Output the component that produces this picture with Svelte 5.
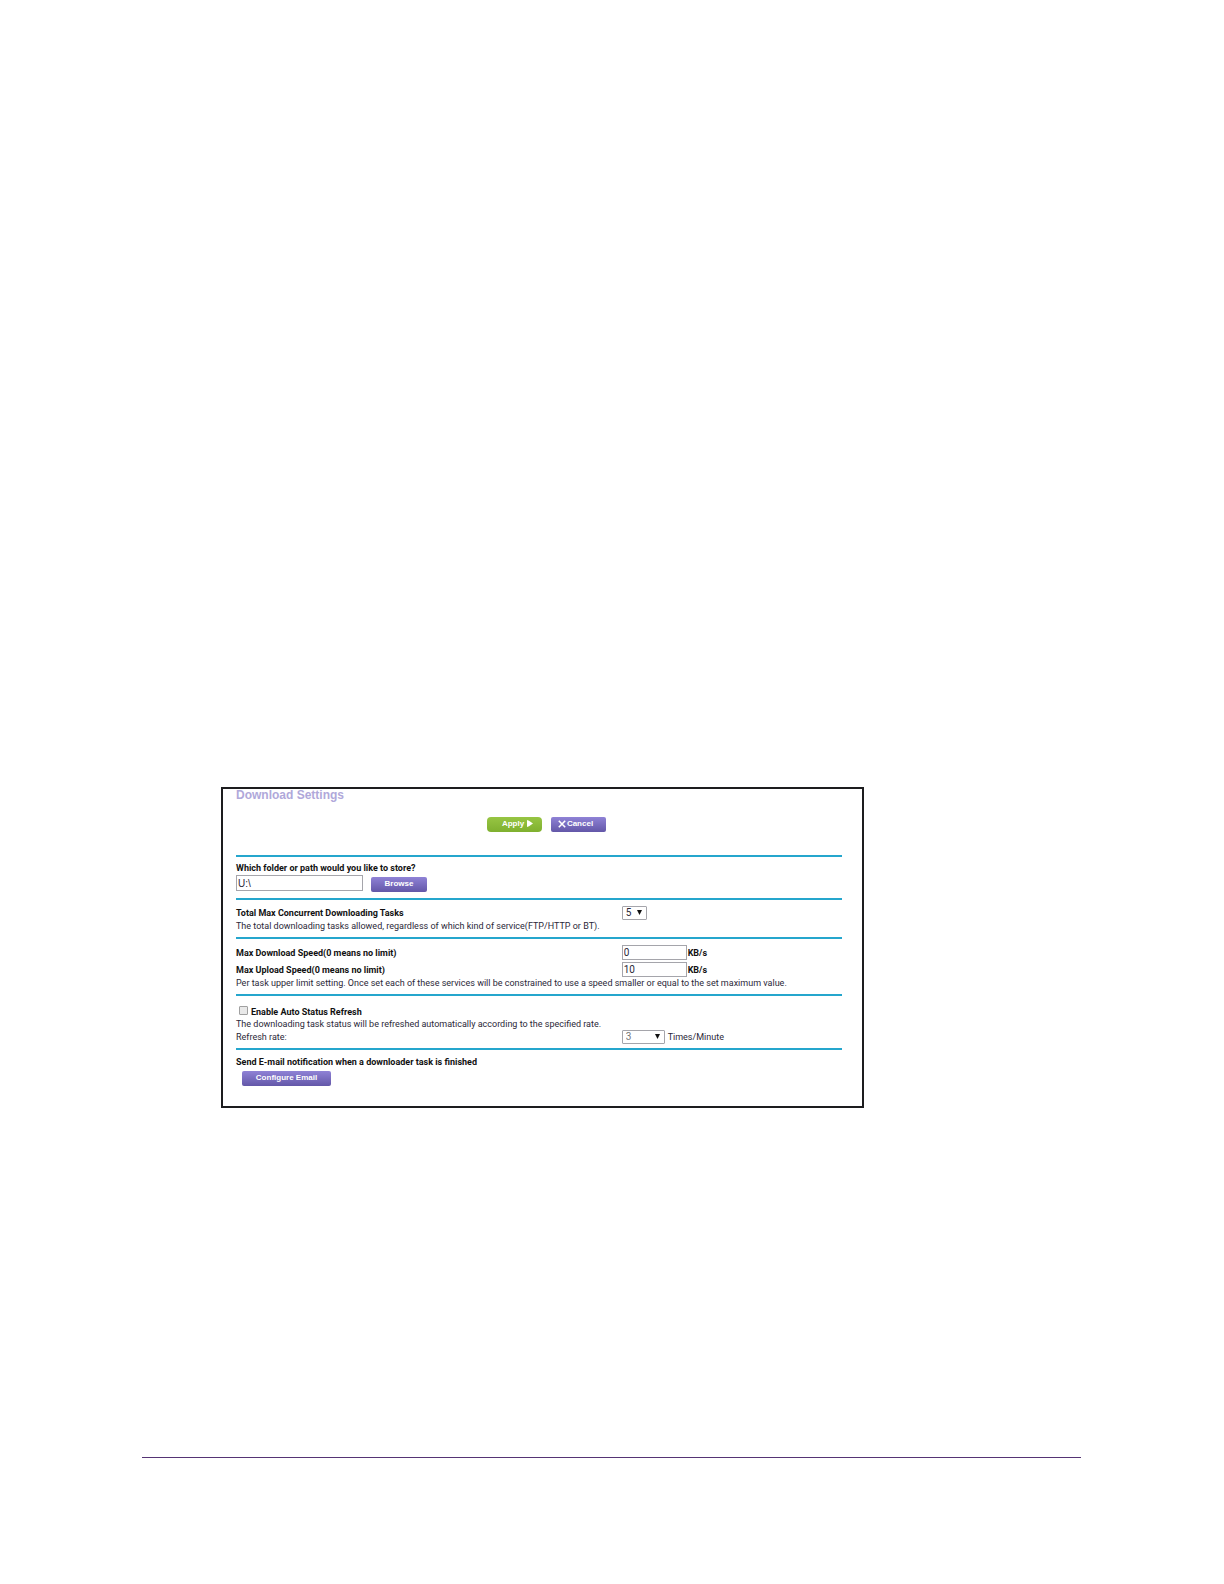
<script>
    let folder = "U:\\";
    let maxTasks = "5";
    let downloadSpeed = "0";
    let uploadSpeed = "10";
    let autoRefresh = false;
    let refreshRate = "3";

    const taskOptions = ["1", "2", "3", "4", "5"];
    const rateOptions = ["1", "2", "3", "4", "5", "6"];
</script>

<main>
    <form class="panel" on:submit|preventDefault>
        <h1>Download Settings</h1>

        <div class="actions">
            <button class="apply" type="submit">
                Apply
                <svg width="6" height="7" viewBox="0 0 6 7"><path d="M0 0 L2 0.8 L6 3.5 L2 6.2 L0 7 Z" fill="#fff" /></svg>
            </button>
            <button class="cancel" type="reset">
                <svg width="8" height="8" viewBox="0 0 8 8"><path d="M0.8 0.8 L7.2 7.2 M7.2 0.8 L0.8 7.2" stroke="#fff" stroke-width="1.6" /></svg>
                Cancel
            </button>
        </div>

        <section class="folder">
            <label class="bold" for="folder">Which folder or path would you like to store?</label>
            <div class="line">
                <input id="folder" class="path" type="text" bind:value={folder} />
                <button class="browse" type="button">Browse</button>
            </div>
        </section>

        <section class="tasks">
            <div class="row">
                <label class="bold" for="tasks">Total Max Concurrent Downloading Tasks</label>
                <span class="select short">
                    <select id="tasks" bind:value={maxTasks}>
                        {#each taskOptions as option}
                            <option>{option}</option>
                        {/each}
                    </select>
                    <svg width="5" height="5" viewBox="0 0 5 5"><path d="M0 0 H5 L2.5 5 Z" fill="#111" /></svg>
                </span>
            </div>
            <p>The total downloading tasks allowed, regardless of which kind of service(FTP/HTTP or BT).</p>
        </section>

        <section class="speed">
            <div class="row">
                <label class="bold" for="download">Max Download Speed(0 means no limit)</label>
                <span class="field">
                    <input id="download" type="text" bind:value={downloadSpeed} />
                    <span class="bold">KB/s</span>
                </span>
            </div>
            <div class="row">
                <label class="bold" for="upload">Max Upload Speed(0 means no limit)</label>
                <span class="field">
                    <input id="upload" type="text" bind:value={uploadSpeed} />
                    <span class="bold">KB/s</span>
                </span>
            </div>
            <p>Per task upper limit setting. Once set each of these services will be constrained to use a speed smaller or equal to the set maximum value.</p>
        </section>

        <section class="refresh">
            <label class="check bold">
                <input type="checkbox" bind:checked={autoRefresh} />
                Enable Auto Status Refresh
            </label>
            <p>The downloading task status will be refreshed automatically according to the specified rate.</p>
            <div class="row">
                <label for="rate">Refresh rate:</label>
                <span class="field">
                    <span class="select">
                        <select id="rate" disabled={!autoRefresh} bind:value={refreshRate}>
                            {#each rateOptions as option}
                                <option>{option}</option>
                            {/each}
                        </select>
                        <svg width="5" height="5" viewBox="0 0 5 5"><path d="M0 0 H5 L2.5 5 Z" fill="#111" /></svg>
                    </span>
                    <span class="unit">Times/Minute</span>
                </span>
            </div>
        </section>

        <section class="email">
            <p class="bold">Send E-mail notification when a downloader task is finished</p>
            <button class="configure" type="button">Configure Email</button>
        </section>
    </form>

    <hr />
</main>

<style>
    :global(body) {
        margin: 0;
        background: #fff;
    }

    main {
        padding: 787px 143px 126px 142px;
        font-family: Roboto, "Liberation Sans", sans-serif;
        font-size: 9px;
        line-height: 12px;
        color: #2b2838;
    }

    .panel {
        margin: 0 217px 0 79px;
        padding: 0 20px 20px 13px;
        border: 2px solid #1d1d1f;
    }

    h1 {
        margin: 0;
        font-family: "Liberation Sans", sans-serif;
        font-size: 12px;
        line-height: 12px;
        color: #b0a8da;
    }

    p {
        margin: 0;
    }

    .bold {
        font-weight: bold;
        color: #111;
    }

    button {
        display: flex;
        align-items: center;
        justify-content: center;
        box-sizing: border-box;
        width: 55px;
        height: 15px;
        padding: 0 0 2px;
        border: none;
        border-radius: 2px;
        background: linear-gradient(#8f82d6, #6357a8);
        font-family: "Liberation Sans", sans-serif;
        font-size: 8px;
        font-weight: bold;
        line-height: 12px;
        color: #fff;
        cursor: pointer;
    }

    .apply {
        gap: 3px;
        padding-left: 6px;
        border-radius: 4px;
        background: linear-gradient(#97c543, #7fb02f);
    }

    .cancel {
        gap: 1px;
        padding-right: 6px;
    }

    .actions {
        display: flex;
        justify-content: center;
        gap: 9px;
        padding: 16px 0 23px 15px;
    }

    section {
        border-top: 2px solid #25a6cd;
    }

    .line {
        display: flex;
        gap: 8px;
        align-items: flex-end;
    }

    .row {
        display: grid;
        grid-template-columns: 7fr 4fr;
        align-items: center;
    }

    .field {
        display: flex;
        align-items: center;
        gap: 1px;
    }

    input[type="text"] {
        box-sizing: border-box;
        width: 65px;
        height: 15px;
        padding: 0 1px;
        border: 1px solid #a5a5ab;
        background: #fff;
        font-family: Roboto, "Liberation Sans", sans-serif;
        font-size: 10px;
        color: #2b2838;
    }

    input.path {
        width: 127px;
        height: 16px;
        font-family: "Liberation Sans", sans-serif;
    }

    .select {
        position: relative;
        display: flex;
        width: 43px;
    }

    .short {
        width: 25px;
    }

    select {
        appearance: none;
        box-sizing: border-box;
        width: 100%;
        height: 14px;
        padding: 0 3px;
        border: 1px solid #a5a5ab;
        border-radius: 1px;
        background: #fff;
        font-family: Roboto, "Liberation Sans", sans-serif;
        font-size: 10px;
        line-height: 12px;
        color: #2b2838;
    }

    select:disabled {
        color: #777;
        opacity: 1;
    }

    .select svg {
        position: absolute;
        top: 4px;
        right: 5px;
        pointer-events: none;
    }

    .unit {
        padding-left: 2px;
    }

    .folder {
        padding: 5px 0 7px;
    }

    .folder label {
        display: block;
        margin-bottom: 1px;
    }

    .line button {
        width: 56px;
        margin-bottom: -1px;
    }

    .tasks {
        padding: 6px 0 5px;
    }

    .speed {
        padding: 6px 0 5px;
    }

    .speed .row + .row {
        margin-top: 2px;
    }

    .refresh {
        padding: 10px 0 4px;
    }

    .check {
        display: flex;
        align-items: center;
        gap: 3px;
    }

    .check input {
        appearance: none;
        box-sizing: border-box;
        width: 9px;
        height: 9px;
        margin: 0 0 3px 3px;
        border: 1px solid #a0a0a0;
        border-radius: 1px;
        background: #e9e9e9;
    }

    .check input:checked {
        background: #5b8def;
    }

    .email {
        padding: 6px 0 0;
    }

    .configure {
        width: 89px;
        margin: 3px 0 0 6px;
    }

    hr {
        margin: 349px 0 0;
        border: none;
        border-top: 1px solid #553474;
    }
</style>
